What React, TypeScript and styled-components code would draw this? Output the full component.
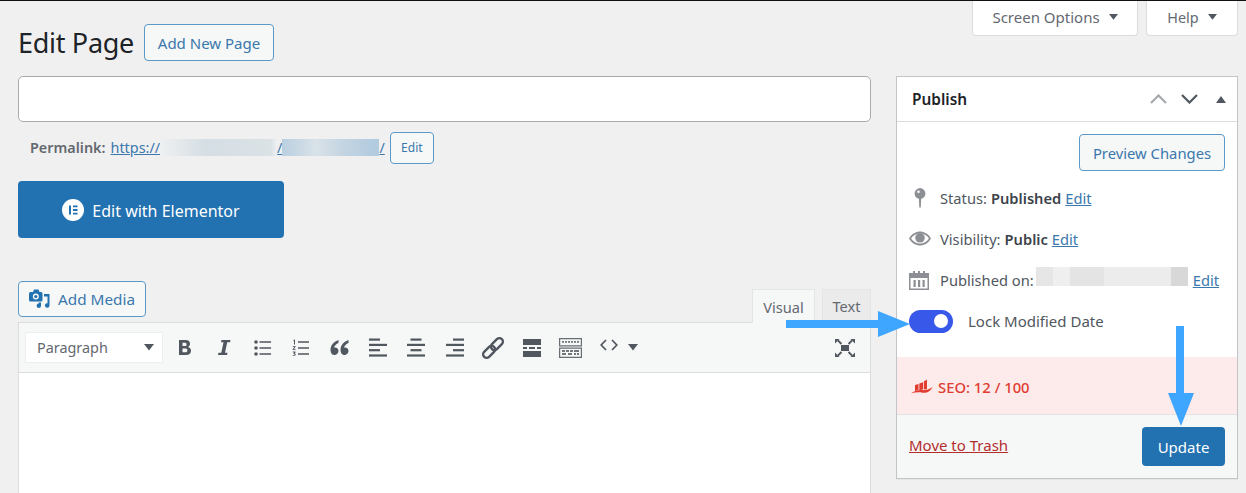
import React from "react";
import styled, { createGlobalStyle } from "styled-components";

const GlobalStyle = createGlobalStyle`
  html, body {
    margin: 0;
    padding: 0;
    background: #f0f0f1;
    overflow: hidden;
  }
  body {
    font-family: "Noto Sans", "Open Sans", sans-serif;
    color: #50575e;
  }
  * { box-sizing: border-box; }
`;

const Page = styled.div`
  position: relative;
  width: 1246px;
  height: 493px;
  overflow: hidden;
  border-top: 1px solid #111;
  padding-left: 18px;
  display: flex;
  gap: 25px;
`;

const LeftColumn = styled.div`
  width: 853px;
  padding-top: 23px;
  display: flex;
  flex-direction: column;
`;

const RightColumn = styled.div`
  width: 342px;
  display: flex;
  flex-direction: column;
`;

const TitleRow = styled.div`
  display: flex;
  align-items: center;
  gap: 11px;
  height: 37px;
`;

const Heading = styled.h1`
  margin: 0;
  width: 115px;
  font-size: 27px;
  font-weight: 400;
  color: #1d2327;
  letter-spacing: -0.3px;
  white-space: nowrap;
`;

const OutlineButton = styled.div<{ $w: number; $h: number; $size?: number }>`
  width: ${(p) => p.$w}px;
  height: ${(p) => p.$h}px;
  display: flex;
  align-items: center;
  justify-content: center;
  gap: 8px;
  flex-shrink: 0;
  background: #f6f7f7;
  border: 1px solid #5b9ac8;
  border-radius: 4px;
  color: #3a78ad;
  font-size: ${(p) => p.$size ?? 15}px;
`;

const TitleInput = styled.div`
  margin-top: 15px;
  height: 46px;
  background: #fff;
  border: 1px solid #a8abae;
  border-radius: 5px;
`;

const PermalinkRow = styled.div`
  margin-top: 10px;
  height: 31px;
  padding-left: 12px;
  display: flex;
  align-items: center;
  font-size: 14.4px;
`;

const PermalinkLabel = styled.b`
  font-weight: 600;
  color: #646970;
  margin-right: 5px;
`;

const PermalinkLink = styled.span`
  display: flex;
  align-items: center;
  color: #3a78ad;
  text-decoration: underline;
  margin-right: 5px;
  white-space: nowrap;
`;

const Blur = styled.i<{ $w: number; $tone: string }>`
  display: block;
  width: ${(p) => p.$w}px;
  height: 17px;
  background: ${(p) => p.$tone};
`;

const ElementorButton = styled.div`
  margin-top: 18px;
  width: 266px;
  height: 57px;
  padding-top: 1px;
  display: flex;
  align-items: center;
  justify-content: center;
  gap: 8px;
  background: #2271b1;
  border-radius: 4px;
  color: #fff;
  font-size: 16px;
  line-height: 22px;
`;

const ElementorLabel = styled.span`
  padding-top: 2px;
`;

const EditorHead = styled.div`
  margin-top: 43px;
  height: 42px;
  display: flex;
  justify-content: space-between;
  align-items: flex-start;
`;

const Tabs = styled.div`
  display: flex;
  gap: 7px;
  margin-top: 8px;
  position: relative;
  z-index: 1;
`;

const Tab = styled.div<{ $active?: boolean; $w: number }>`
  width: ${(p) => p.$w}px;
  height: 34px;
  display: flex;
  align-items: center;
  justify-content: center;
  font-size: 14.6px;
  color: #646970;
  background: ${(p) => (p.$active ? "#f6f7f7" : "#ebebec")};
  border: 1px solid #e4e5e6;
  border-bottom: ${(p) => (p.$active ? "none" : "1px solid #dcdcde")};
`;

const Editor = styled.div`
  flex: 1;
  margin-top: -1px;
  background: #fff;
  border: 1px solid #dcdcde;
  border-bottom: none;
`;

const Toolbar = styled.div`
  height: 50px;
  display: flex;
  align-items: center;
  padding: 0 6px;
  background: #f6f7f7;
  border-bottom: 1px solid #dcdcde;
`;

const FormatSelect = styled.div`
  width: 138px;
  height: 31px;
  padding: 0 8px 0 11px;
  display: flex;
  align-items: center;
  justify-content: space-between;
  background: #fff;
  border: 1px solid #eceded;
  font-size: 14.4px;
  color: #646970;
  margin-right: 3px;
`;

const ToolIcon = styled.span<{ $w?: number; $lift?: number }>`
  width: ${(p) => p.$w ?? 38.5}px;
  height: 24px;
  display: flex;
  align-items: center;
  justify-content: center;
  flex-shrink: 0;
  padding-bottom: ${(p) => p.$lift ?? 0}px;
`;

const ToolSpacer = styled.div`
  flex: 1;
`;

const ScreenTabs = styled.div`
  display: flex;
  justify-content: flex-end;
  gap: 8px;
  height: 35px;
  margin-bottom: 40px;
`;

const ScreenTab = styled.div<{ $w: number; $size: number }>`
  width: ${(p) => p.$w}px;
  padding-bottom: 2px;
  display: flex;
  align-items: center;
  justify-content: center;
  gap: 9px;
  background: #fff;
  border: 1px solid #dcdcde;
  border-top: none;
  border-radius: 0 0 4px 4px;
  font-size: ${(p) => p.$size}px;
  color: #646970;
`;

const PublishBox = styled.div`
  height: 403px;
  display: flex;
  flex-direction: column;
  background: #fff;
  border: 1px solid #c3c4c7;
  box-shadow: 0 1px 1px rgba(0, 0, 0, 0.04);
`;

const BoxHeader = styled.div`
  height: 45px;
  flex-shrink: 0;
  display: flex;
  align-items: center;
  justify-content: space-between;
  padding: 0 11px 0 15px;
  border-bottom: 1px solid #dcdcde;
`;

const BoxTitle = styled.div`
  font-size: 15.4px;
  font-weight: 600;
  color: #1d2327;
`;

const BoxControls = styled.div`
  display: flex;
  align-items: center;
  gap: 14px;
`;

const CollapseCaret = styled.svg`
  margin-left: 4px;
`;

const PreviewRow = styled.div`
  display: flex;
  justify-content: flex-end;
  padding: 12px 12px 0 0;
  height: 55px;
`;

const MetaRow = styled.div`
  height: 41px;
  display: flex;
  align-items: center;
  padding-left: 12px;
  font-size: 14.7px;
  color: #50575e;
  white-space: nowrap;
`;

const MetaIcon = styled.span<{ $inset?: number }>`
  width: 31px;
  flex-shrink: 0;
  display: flex;
  align-items: center;
  padding-left: ${(p) => p.$inset ?? 0}px;
`;

const MetaValue = styled.b`
  font-weight: 600;
  margin-left: 4px;
  color: #3c434a;
`;

const EditLink = styled.span`
  color: #3a78ad;
  text-decoration: underline;
  margin-left: 4px;
`;

const BlurredDate = styled.span`
  width: 152px;
  height: 19px;
  margin-top: -7px;
  margin-left: 2px;
  margin-right: 1px;
  background: linear-gradient(
    90deg,
    #e6e6e6 0 17px,
    #efefef 17px 34px,
    #e4e4e4 34px 68px,
    #ececec 68px 135px,
    #d8d8d8 135px
  );
`;

const ToggleRow = styled(MetaRow)`
  height: 42px;
  font-size: 15px;
`;

const Toggle = styled.span`
  width: 44px;
  height: 23px;
  margin-right: 15px;
  padding-right: 5px;
  display: flex;
  align-items: center;
  justify-content: flex-end;
  background: #3858e9;
  border-radius: 12px;
`;

const ToggleKnob = styled.span`
  width: 14px;
  height: 14px;
  background: #fff;
  border-radius: 50%;
`;

const SeoBar = styled.div`
  margin-top: 15px;
  height: 58px;
  padding: 2px 0 0 14px;
  display: flex;
  align-items: center;
  gap: 5px;
  background: #fdeaea;
  border-bottom: 1px solid #e4e2e2;
  color: #e03c31;
  font-size: 14.8px;
  font-weight: 500;
`;

const BoxActions = styled.div`
  flex: 1;
  display: flex;
  align-items: flex-start;
  justify-content: space-between;
  padding: 12px 12px 0 12px;
  background: #f6f7f7;
`;

const TrashLink = styled.span`
  margin-top: 8px;
  font-size: 15px;
  color: #b32d2e;
  text-decoration: underline;
`;

const UpdateButton = styled.div`
  width: 83px;
  height: 39px;
  display: flex;
  align-items: center;
  justify-content: center;
  background: #2271b1;
  border-radius: 4px;
  color: #fff;
  font-size: 15px;
`;

const ArrowOverlay = styled.svg`
  position: absolute;
  top: -1px;
  left: 0;
  z-index: 2;
  pointer-events: none;
`;

const Caret = ({ color = "#50575e", w = 10 }: { color?: string; w?: number }) => (
  <svg width={w} height={w * 0.65} viewBox="0 0 10 6.500">
    <path d="M0 0h10L5 6.500z" fill={color} />
  </svg>
);

const ICON = "#50575e";

const ElementorIcon = () => (
  <svg width="22" height="22" viewBox="0 0 22 22">
    <circle cx="11" cy="11" r="11" fill="#fff" />
    <path d="M7 6.500h2v9H7zM11 6.500h4.500v1.800H11zM11 10.100h4.500v1.800H11zM11 13.700h4.500v1.800H11z" fill="#2271b1" />
  </svg>
);

const MediaIcon = () => (
  <svg width="21" height="20" viewBox="0 0 21 20">
    <path
      d="M1.500 3H4l1-2.500h4.500L10.500 3H12a1.500 1.500 0 0 1 1.500 1.500V11a1.500 1.500 0 0 1-1.500 1.500H1.500A1.500 1.500 0 0 1 0 11V4.500A1.500 1.500 0 0 1 1.500 3z"
      fill="#2271b1"
    />
    <circle cx="6.800" cy="7.500" r="3" fill="#f6f7f7" />
    <circle cx="6.800" cy="7.500" r="1.600" fill="#2271b1" />
    <path d="M15 5h5.500v11.500a2.300 2.300 0 1 1-2-2.300V7.500H15z" fill="#2271b1" />
    <path d="M9.500 13.500h2.500v3.200a2.200 2.200 0 1 1-2-2.200v-.2h-.5z" fill="#2271b1" />
  </svg>
);

const BoldIcon = () => (
  <svg width="14" height="17" viewBox="0 0 14 17">
    <path
      fillRule="evenodd"
      d="M1 1h6.500c3 0 4.500 1.400 4.500 3.800 0 1.500-.8 2.700-2.100 3.200 1.800.4 3.100 1.700 3.100 3.800 0 2.800-2 4.200-5 4.200H1zM4.500 3.700v3.400h2.300c1.200 0 1.800-.6 1.800-1.700s-.6-1.700-1.800-1.700zM4.500 9.600v3.700h2.700c1.300 0 2.200-.6 2.200-1.900s-.9-1.800-2.200-1.800z"
      fill={ICON}
    />
  </svg>
);

const ItalicIcon = () => (
  <svg width="14" height="17" viewBox="0 0 14 17">
    <path d="M4.500 1h9l-.5 2.200h-2.800L8 13.800h2.500l-.5 2.200H1l.5-2.200h2.800L6.500 3.200H4z" fill={ICON} />
  </svg>
);

const BulletIcon = () => (
  <svg width="17" height="16" viewBox="0 0 17 16">
    <circle cx="2" cy="2" r="1.800" fill={ICON} />
    <circle cx="2" cy="8" r="1.800" fill={ICON} />
    <circle cx="2" cy="14" r="1.800" fill={ICON} />
    <path d="M5.500 1.300H17v1.400H5.500zM5.500 7.300H17v1.400H5.500zM5.500 13.300H17v1.400H5.500z" fill={ICON} />
  </svg>
);

const NumberedIcon = () => (
  <svg width="17" height="18" viewBox="0 0 17 18">
    <path d="M6 2.300h11v1.400H6zM6 8.300h11v1.400H6zM6 14.300h11v1.400H6z" fill={ICON} />
    <path d="M1.500 1 3 .5v5H2V2l-.5.200zM.8 7h2.700v1L1.800 10.200h1.800V11H.7v-.8l1.800-2.400H.8zM.8 12.500h2.700v1l-.8.900c.7.100 1 .5 1 1.100 0 .8-.7 1.200-1.600 1.200H.7v-.8h1.300c.4 0 .7-.1.700-.4s-.3-.5-.8-.5h-.4v-.6l.8-.9H.8z" fill={ICON} />
  </svg>
);

const QuoteIcon = () => (
  <svg width="19" height="15" viewBox="0 0 19 15">
    <path d="M8.500 0C4 1.500.5 5 .5 10c0 3 1.700 5 3.900 5S8.500 13 8.500 11 7 7.500 5 7.500c-.4 0-.7 0-1 .1C4.400 5.600 6.300 4 8.500 3zM18.500 0C14 1.500 10.500 5 10.500 10c0 3 1.700 5 3.900 5s4.100-2 4.100-4-1.500-3.500-3.500-3.500c-.4 0-.7 0-1 .1.400-2 2.300-3.600 4.500-4.600z" fill={ICON} />
  </svg>
);

const ALIGN_ROWS = [
  { y: 0.5, w: 11 },
  { y: 5.800, w: 18 },
  { y: 11.100, w: 11 },
  { y: 16.400, w: 18 },
];

const AlignIcon = ({ kind }: { kind: "left" | "center" | "right" }) => (
  <svg width="18" height="19" viewBox="0 0 18 19">
    {ALIGN_ROWS.map((row) => {
      const x = kind === "left" ? 0 : kind === "center" ? (18 - row.w) / 2 : 18 - row.w;
      return <rect key={row.y} x={x} y={row.y} width={row.w} height="2.200" fill={ICON} />;
    })}
  </svg>
);

const LinkIcon = () => (
  <svg width="22" height="22" viewBox="0 0 22 22" fill="none" stroke={ICON} strokeWidth="2.400">
    <g transform="rotate(-45 11 11)">
      <rect x="-1.500" y="7.500" width="14" height="7" rx="3.500" />
      <rect x="9.500" y="7.500" width="14" height="7" rx="3.500" />
    </g>
  </svg>
);

const ReadMoreIcon = () => (
  <svg width="18" height="18" viewBox="0 0 18 18">
    <path d="M0 0h18v6H0zM0 8h4v2H0zM6 8h6v2H6zM14 8h4v2h-4zM0 12h18v6H0z" fill={ICON} />
  </svg>
);

const KitchenIcon = () => (
  <svg width="23" height="20" viewBox="0 0 23 20">
    <path fillRule="evenodd" d="M0 0h23v8.500H0zM1.200 1.200v6h20.600v-6zM0 9.500h23V20H0zm1.200 1.200v8h20.600v-8z" fill={ICON} opacity=".85" />
    <path d="M3 3h2v1.800H3zM6 3h2v1.800H6zM9 3h2v1.800H9zM12 3h2v1.800h-2zM15 3h2v1.800h-2zM18 3h2v1.800h-2zM3 12h3v2H3zM7 12h3v2H7zM11 12h3v2h-3zM15 12h5v2h-5zM3 15h4v2H3zM9 15h4v2H9zM15 15h2v2h-2zM18 15h2v2h-2z" fill={ICON} opacity=".8" />
  </svg>
);

const CodeIcon = () => (
  <svg width="18" height="12" viewBox="0 0 18 12" fill="none" stroke={ICON} strokeWidth="1.700">
    <path d="M6 1L1.200 6 6 11M12 1l4.800 5L12 11" />
  </svg>
);

const ExpandIcon = () => (
  <svg width="22" height="20" viewBox="0 0 22 20">
    <path d="M7 7h8v6H7z" fill={ICON} />
    <path d="M4 2.500L7.500 6M18 2.500L14.500 6M4 17.500L7.500 14M18 17.500L14.500 14" stroke={ICON} strokeWidth="1.800" />
    <path d="M1 1h4.500L1 5.500zM21 1h-4.500L21 5.500zM1 19h4.500L1 14.500zM21 19h-4.500L21 14.500z" fill={ICON} />
  </svg>
);

const PinIcon = () => (
  <svg width="12" height="20" viewBox="0 0 12 20">
    <circle cx="6" cy="5.500" r="5.400" fill="#8c8f94" />
    <circle cx="4.500" cy="3.800" r="1.300" fill="#fff" />
    <path d="M4.800 9h2.400L6.800 19.500H5.300z" fill="#8c8f94" />
  </svg>
);

const EyeIcon = () => (
  <svg width="22" height="15" viewBox="0 0 22 15">
    <path d="M0 7.500C3 2.500 7 .5 11 .5s8 2 11 7c-3 5-7 7-11 7s-8-2-11-7z" fill="#8c8f94" />
    <path d="M2 7.500C4.500 4 7.500 2.500 11 2.500s6.500 1.500 9 5c-2.500 3.500-5.500 5-9 5s-6.500-1.500-9-5z" fill="#fff" />
    <circle cx="11" cy="6.800" r="4.800" fill="#8c8f94" />
  </svg>
);

const CalendarIcon = () => (
  <svg width="20" height="20" viewBox="0 0 20 20">
    <path fillRule="evenodd" d="M0 3h20v17H0zM1.500 8v10.500h17V8z" fill="#8c8f94" />
    <path d="M4 1h2v4H4zM9 1h2v4H9zM14 1h2v4h-2zM4.500 10h2.200v7H4.500zM9 10h2.200v7H9zM13.500 10h2.200v7h-2.200z" fill="#8c8f94" />
  </svg>
);

const SeoIcon = () => (
  <svg width="22" height="15" viewBox="0 0 22 15">
    <path d="M4 6l3.500-1v6L4 12zM8.300 4.500l3.700-1.200v7.200l-3.700.8zM12.800 2.500L16 .5v9.800l-3.200.3z" fill="#e03c31" />
    <path d="M0 14.500c3.500-2.800 7.500-3.800 11.500-3.400 3.500.3 6.200-.6 10-3.100-1.800 4.300-5.500 6.500-10 5.700-4-.7-7.800-.3-11.500.8z" fill="#e03c31" />
  </svg>
);

const App = () => {
  return (
    <>
      <GlobalStyle />
      <Page>
        <LeftColumn>
          <TitleRow>
            <Heading>Edit Page</Heading>
            <OutlineButton $w={130} $h={37}>Add New Page</OutlineButton>
          </TitleRow>
          <TitleInput />
          <PermalinkRow>
            <PermalinkLabel>Permalink:</PermalinkLabel>
            <PermalinkLink>
              https://
              <Blur $w={117} $tone="linear-gradient(90deg,#eef0f1,#d5dee4 40%,#dbe2e6 95%,#eef0f1)" />
              /
              <Blur $w={97} $tone="linear-gradient(90deg,#b9cfe0,#d9e2e9 35%,#c6d6e2 60%,#b2cbdf 95%)" />
              /
            </PermalinkLink>
            <OutlineButton $w={44} $h={32} $size={12}>Edit</OutlineButton>
          </PermalinkRow>
          <ElementorButton>
            <ElementorIcon />
            <ElementorLabel>Edit with Elementor</ElementorLabel>
          </ElementorButton>
          <EditorHead>
            <OutlineButton $w={128} $h={36} $size={15.3}>
              <MediaIcon />
              Add Media
            </OutlineButton>
            <Tabs>
              <Tab $active $w={63}>Visual</Tab>
              <Tab $w={49}>Text</Tab>
            </Tabs>
          </EditorHead>
          <Editor>
            <Toolbar>
              <FormatSelect>
                Paragraph
                <Caret />
              </FormatSelect>
              <ToolIcon><BoldIcon /></ToolIcon>
              <ToolIcon><ItalicIcon /></ToolIcon>
              <ToolIcon><BulletIcon /></ToolIcon>
              <ToolIcon><NumberedIcon /></ToolIcon>
              <ToolIcon><QuoteIcon /></ToolIcon>
              <ToolIcon><AlignIcon kind="left" /></ToolIcon>
              <ToolIcon><AlignIcon kind="center" /></ToolIcon>
              <ToolIcon><AlignIcon kind="right" /></ToolIcon>
              <ToolIcon><LinkIcon /></ToolIcon>
              <ToolIcon><ReadMoreIcon /></ToolIcon>
              <ToolIcon><KitchenIcon /></ToolIcon>
              <ToolIcon $lift={5}><CodeIcon /></ToolIcon>
              <ToolIcon $w={10}><Caret w={10} /></ToolIcon>
              <ToolSpacer />
              <ToolIcon><ExpandIcon /></ToolIcon>
            </Toolbar>
          </Editor>
        </LeftColumn>
        <RightColumn>
          <ScreenTabs>
            <ScreenTab $w={166} $size={15}>Screen Options <Caret w={9} /></ScreenTab>
            <ScreenTab $w={92} $size={14.4}>Help <Caret w={9} /></ScreenTab>
          </ScreenTabs>
          <PublishBox>
            <BoxHeader>
              <BoxTitle>Publish</BoxTitle>
              <BoxControls>
                <svg width="17" height="10" viewBox="0 0 17 10" fill="none" stroke="#a7aaad" strokeWidth="2.200">
                  <path d="M1 9l7.500-7.500L16 9" />
                </svg>
                <svg width="17" height="10" viewBox="0 0 17 10" fill="none" stroke="#50575e" strokeWidth="2.200">
                  <path d="M1 1l7.500 7.500L16 1" />
                </svg>
                <CollapseCaret width="10" height="7" viewBox="0 0 10 7">
                  <path d="M0 7h10L5 0z" fill="#50575e" />
                </CollapseCaret>
              </BoxControls>
            </BoxHeader>
            <PreviewRow>
              <OutlineButton $w={146} $h={37} $size={14.8}>Preview Changes</OutlineButton>
            </PreviewRow>
            <MetaRow>
              <MetaIcon $inset={5}><PinIcon /></MetaIcon>
              Status:<MetaValue>Published</MetaValue>
              <EditLink>Edit</EditLink>
            </MetaRow>
            <MetaRow>
              <MetaIcon><EyeIcon /></MetaIcon>
              Visibility:<MetaValue>Public</MetaValue>
              <EditLink>Edit</EditLink>
            </MetaRow>
            <MetaRow>
              <MetaIcon><CalendarIcon /></MetaIcon>
              Published on:
              <BlurredDate />
              <EditLink>Edit</EditLink>
            </MetaRow>
            <ToggleRow>
              <Toggle><ToggleKnob /></Toggle>
              Lock Modified Date
            </ToggleRow>
            <SeoBar>
              <SeoIcon />
              SEO: 12 / 100
            </SeoBar>
            <BoxActions>
              <TrashLink>Move to Trash</TrashLink>
              <UpdateButton>Update</UpdateButton>
            </BoxActions>
          </PublishBox>
        </RightColumn>
        <ArrowOverlay width="1246" height="493" viewBox="0 0 1246 493">
          <path d="M786 320h92v-9l32 13-32 13v-9h-92z" fill="#3ea6ff" />
          <path d="M1176 326h8v67h10l-13 33-13-33h8z" fill="#3ea6ff" />
        </ArrowOverlay>
      </Page>
    </>
  );
};

export default App;
